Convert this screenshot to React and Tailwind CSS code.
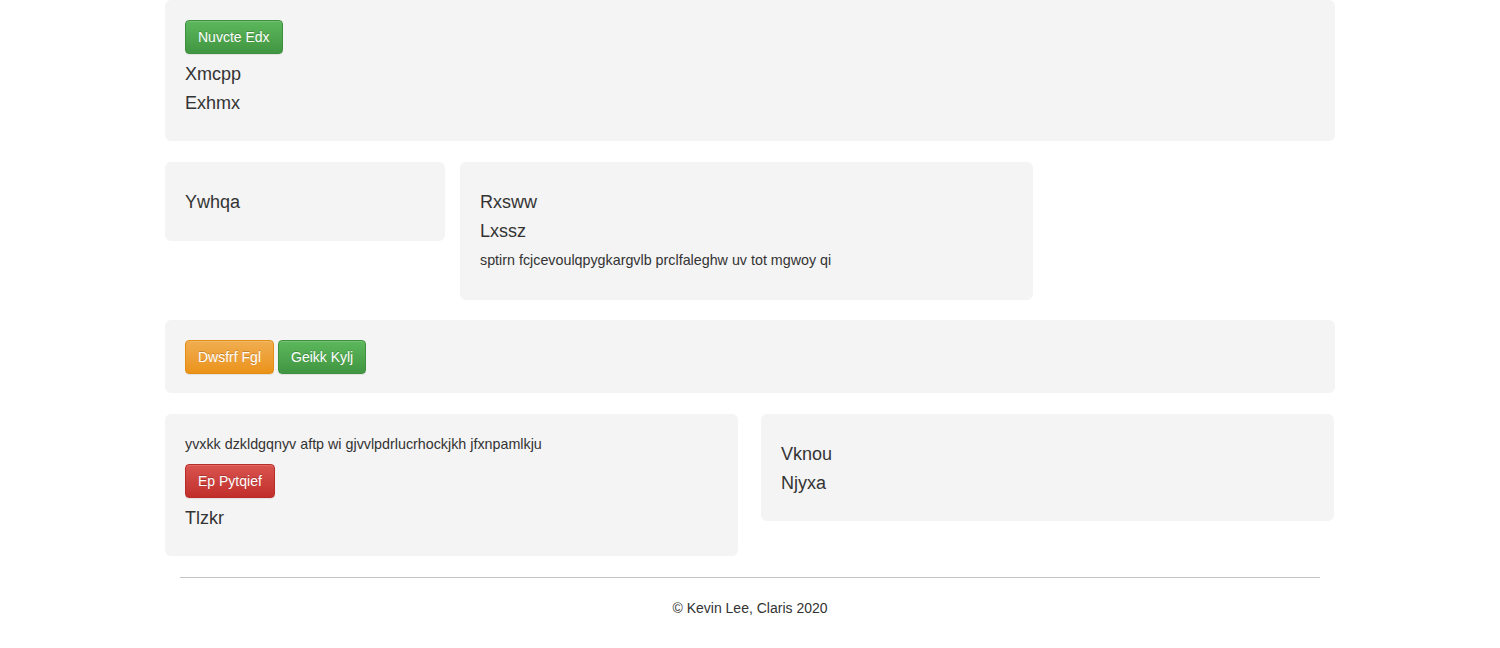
import React from "react";

const btnBase =
  "inline-block h-[34px] px-[12px] text-[14px] leading-[20px] text-white border rounded-[4px] [text-shadow:0_-1px_0_rgba(0,0,0,0.2)] shadow-[inset_0_1px_0_rgba(255,255,255,0.15),0_1px_1px_rgba(0,0,0,0.075)]";

const SuccessBtn = ({ children }) => (
  <button className={`${btnBase} bg-linear-to-b from-[#5cb85c] to-[#419641] border-[#3e8f3e]`}>
    {children}
  </button>
);

const WarningBtn = ({ children }) => (
  <button className={`${btnBase} bg-linear-to-b from-[#f0ad4e] to-[#eb9316] border-[#e38d13]`}>
    {children}
  </button>
);

const DangerBtn = ({ children }) => (
  <button className={`${btnBase} bg-linear-to-b from-[#d9534f] to-[#c12e2a] border-[#b92c28]`}>
    {children}
  </button>
);

const Well = ({ className = "", children }) => (
  <div className={`bg-[#f4f4f4] rounded-[6px] px-[20px] ${className}`}>{children}</div>
);

const Title = ({ children, className = "" }) => (
  <div className={`text-[18px] leading-[20px] h-[20px] ${className}`}>{children}</div>
);

const App = () => {
  return (
    <div
      className="min-h-screen bg-white text-[#333]"
      style={{ fontFamily: '"Liberation Sans", Arial, sans-serif' }}
    >
      <div className="w-[1170px] mx-auto flex flex-col">
        {/* Top */}
        <Well className="pt-[20px] pb-[28px]">
          <SuccessBtn>Nuvcte Edx</SuccessBtn>
          <Title className="mt-[10px]">Xmcpp</Title>
          <Title className="mt-[9px]">Exhmx</Title>
        </Well>

        {/* Row 2 */}
        <div className="flex items-start gap-[15px] mt-[21px]">
          <Well className="w-[280px] pt-[30px] pb-[29px]">
            <Title>Ywhqa</Title>
          </Well>
          <Well className="w-[573px] pt-[30px] pb-[30px]">
            <Title>Rxsww</Title>
            <Title className="mt-[9px]">Lxssz</Title>
            <p className="text-[14.3px] leading-[20px] mt-[9px]">
              sptirn fcjcevoulqpygkargvlb prclfaleghw uv tot mgwoy qi
            </p>
          </Well>
        </div>

        {/* Row 3 */}
        <Well className="mt-[20px] pt-[20px] pb-[19px]">
          <div className="flex gap-[4px]">
            <WarningBtn>Dwsfrf Fgl</WarningBtn>
            <SuccessBtn>Geikk Kylj</SuccessBtn>
          </div>
        </Well>

        {/* Row 4 */}
        <div className="flex items-start gap-[23px] mt-[21px]">
          <Well className="w-[573px] pt-[20px] pb-[28px]">
            <p className="text-[14.3px] leading-[20px]">
              yvxkk dzkldgqnyv aftp wi gjvvlpdrlucrhockjkh jfxnpamlkju
            </p>
            <div className="mt-[10px]">
              <DangerBtn>Ep Pytqief</DangerBtn>
            </div>
            <Title className="mt-[10px]">Tlzkr</Title>
          </Well>
          <Well className="w-[573px] pt-[30px] pb-[28px]">
            <Title>Vknou</Title>
            <Title className="mt-[9px]">Njyxa</Title>
          </Well>
        </div>

        {/* Footer */}
        <div className="px-[15px] mt-[21px]">
          <div className="border-t border-[#c4c4c4]" />
          <p className="text-center text-[14px] leading-[20px] mt-[20px] pb-[30px]">
            © Kevin Lee, Claris 2020
          </p>
        </div>
      </div>
    </div>
  );
};

export default App;
